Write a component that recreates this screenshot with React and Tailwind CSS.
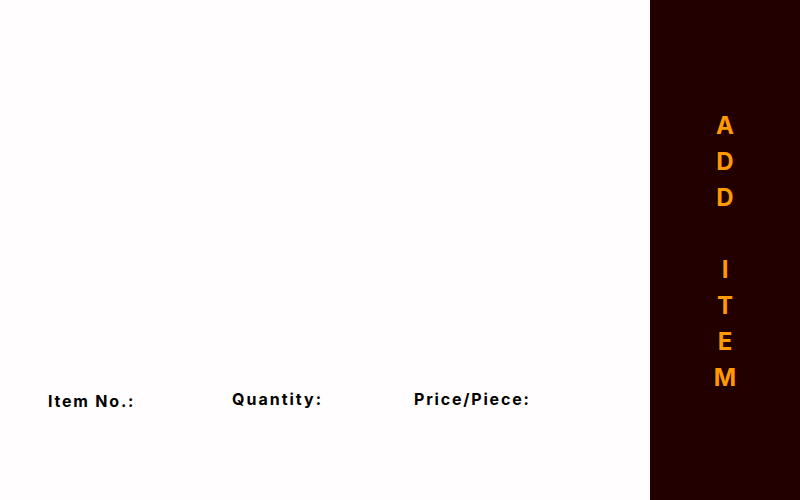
export default function App() {
  const word = ["A", "D", "D", "\u00a0", "I", "T", "E", "M"];

  return (
    <div
      className="flex h-[500px] w-[800px] bg-[#fffdfd]"
      style={{ fontFamily: "Inter, 'Open Sans', sans-serif" }}
    >
      {/* Form area */}
      <div className="flex w-[650px] flex-col justify-end pb-[87px] pl-[48px]">
        <div className="flex items-start">
          <div className="w-[184px] pt-[2px]">
            <label className="text-[16px] font-bold tracking-[1.8px] text-black">
              Item No.:
            </label>
          </div>
          <div className="w-[182px]">
            <label className="text-[16px] font-bold tracking-[2px] text-black">
              Quantity:
            </label>
          </div>
          <div>
            <label className="text-[16px] font-bold tracking-[1.8px] text-black">
              Price/Piece:
            </label>
          </div>
        </div>
      </div>

      {/* Add item button */}
      <button className="flex w-[150px] flex-col items-center bg-[#220000] pt-[108px]">
        {word.map((ch, i) => (
          <span
            key={i}
            className="h-[36px] text-[24px] leading-[36px] font-bold text-[#ff9a00]"
          >
            {ch}
          </span>
        ))}
      </button>
    </div>
  );
}
